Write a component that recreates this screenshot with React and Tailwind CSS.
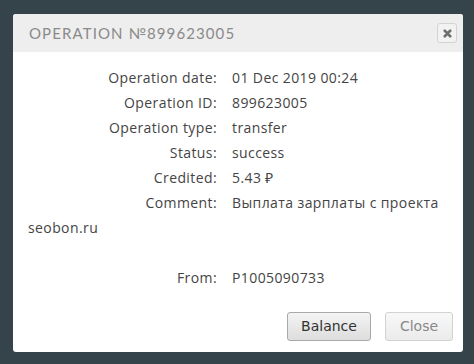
import React from "react";

const rows = [
  ["Operation date:", "01 Dec 2019 00:24"],
  ["Operation ID:", "899623005"],
  ["Operation type:", "transfer"],
  ["Status:", "success"],
  ["Credited:", "5.43 ₽"],
];

function Row({ label, children }) {
  return (
    <div className="leading-[25px]">
      <span className="inline-block w-[204px] pr-[15px] text-right">{label}</span>
      {children}
    </div>
  );
}

export default function App() {
  return (
    <div className="w-[474px] h-[364px] bg-[#35434b] pt-[14px] pl-[13px]">
      <div className="w-[450px] h-[338px] bg-white rounded-[3px] flex flex-col overflow-hidden">
        {/* header */}
        <div className="h-[38px] bg-[#eeeeee] flex items-center justify-between pl-[16px] pr-[6px]">
          <div className="text-[15px] tracking-[1.1px] text-[#8a8a8a] font-['Lato',sans-serif]">
            OPERATION №899623005
          </div>
          <button className="w-[20px] h-[20px] border border-[#d4d4d4] rounded-[3px] flex items-center justify-center bg-[#f2f2f2]">
            <svg width="9" height="9" viewBox="0 0 10 10">
              <path d="M2 2 L8 8 M8 2 L2 8" stroke="#6f6f6f" strokeWidth="3" strokeLinecap="round" />
            </svg>
          </button>
        </div>

        {/* body */}
        <div className="flex-1 pt-[13px] pl-[15px] pr-[20px] text-[14px] tracking-[0.4px] text-[#444] font-['Open_Sans',sans-serif]">
          {rows.map(([l, v]) => (
            <Row key={l} label={l}>{v}</Row>
          ))}
          <div className="leading-[25px] mb-[25px]">
            <span className="inline-block w-[204px] pr-[15px] text-right">Comment:</span>
            Выплата зарплаты с проекта seobon.ru
          </div>
          <Row label="From:">P1005090733</Row>
        </div>

        {/* footer */}
        <div className="flex justify-end gap-[14px] pr-[10px] pb-[11px] font-['DejaVu_Sans',sans-serif] text-[14px]">
          <button className="w-[84px] h-[29px] rounded-[3px] border border-[#a9a9a9] bg-gradient-to-b from-[#f4f4f4] to-[#dddddd] text-[#333]">
            Balance
          </button>
          <button className="w-[68px] h-[29px] rounded-[3px] border border-[#d2d2d2] bg-gradient-to-b from-[#f8f8f8] to-[#ebebeb] text-[#888]">
            Close
          </button>
        </div>
      </div>
    </div>
  );
}
